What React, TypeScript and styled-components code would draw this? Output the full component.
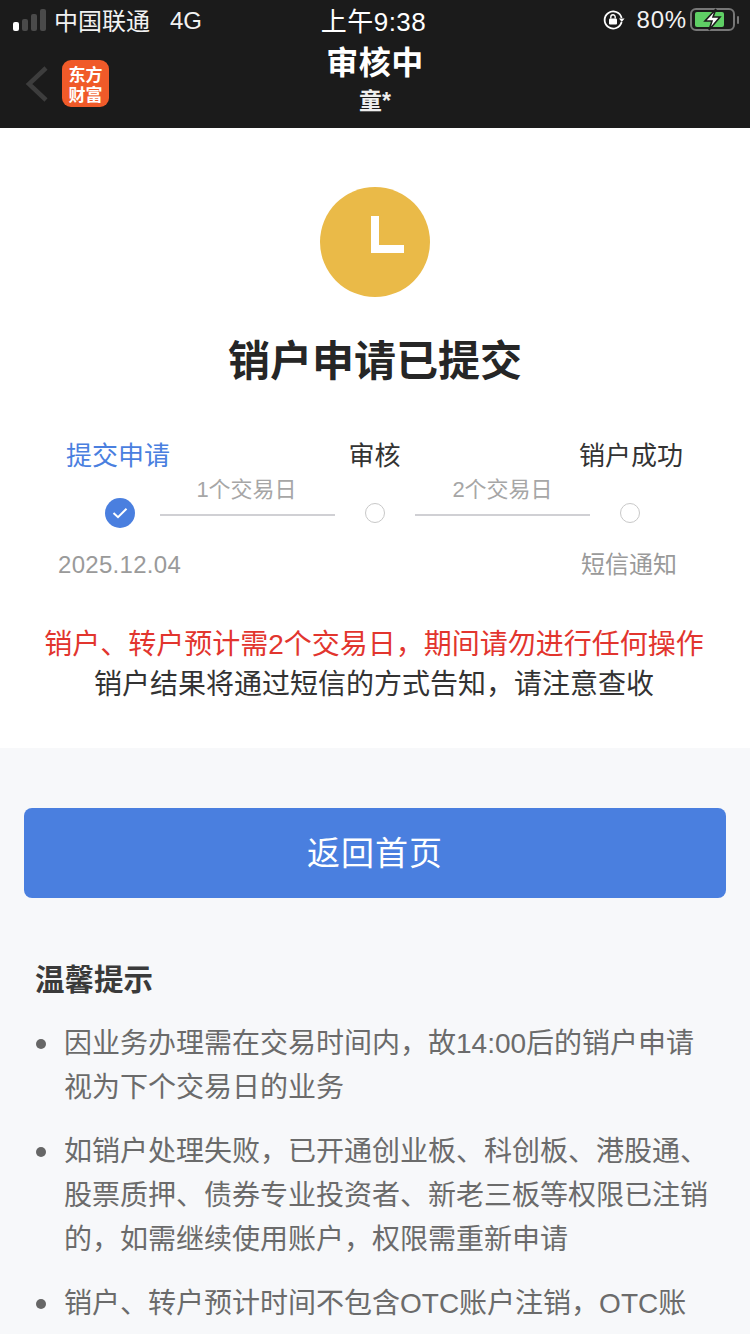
import React from 'react';
import styled, { createGlobalStyle } from 'styled-components';

const Global = createGlobalStyle`
  html, body {
    margin: 0;
    padding: 0;
    height: 1334px;
    overflow: hidden;
    background: #f7f8fa;
  }
  * { box-sizing: border-box; }
  body {
    font-family: "Liberation Sans", "Noto Sans CJK SC", sans-serif;
  }
`;

const Page = styled.div`
  width: 750px;
  height: 1334px;
  overflow: hidden;
  background: #f7f8fa;
`;

const Header = styled.header`
  height: 128px;
  background: #1b1b1b;
  color: #fff;
`;

const StatusBar = styled.div`
  height: 40px;
  padding: 0 11px 0 13px;
  display: grid;
  grid-template-columns: 1fr auto 1fr;
  align-items: center;
  font-size: 24px;
`;

const StatusLeft = styled.div`
  display: flex;
  align-items: center;
  gap: 7px;
  color: #f2f2f2;
  margin-top: -1px;
`;

const NetworkType = styled.span`
  margin-left: 13px;
  padding-top: 2px;
`;

const Clock = styled.div`
  font-size: 26px;
  letter-spacing: 0.5px;
  margin-left: -5px;
  margin-top: -1px;
`;

const StatusRight = styled.div`
  display: flex;
  align-items: center;
  justify-content: flex-end;
  gap: 5px;
  color: #f2f2f2;
`;

const Percent = styled.span`
  margin-left: 7px;
  margin-right: -2px;
  letter-spacing: 0.8px;
`;

const NavBar = styled.div`
  height: 88px;
  position: relative;
  display: flex;
  flex-direction: column;
  align-items: center;
`;

const NavLeft = styled.div`
  position: absolute;
  left: 24px;
  top: 20px;
  display: flex;
  align-items: center;
  gap: 12px;
`;

const Logo = styled.div`
  width: 47px;
  height: 47px;
  border-radius: 9px;
  background: #f05a29;
  color: #fff;
  font-family: "Noto Sans CJK SC", sans-serif;
  font-size: 17px;
  font-weight: 700;
  line-height: 20px;
  text-align: center;
  padding-top: 4px;
`;

const NavTitle = styled.div`
  font-size: 32px;
  font-weight: 700;
  line-height: 44px;
  margin-top: 1px;
  letter-spacing: 0.5px;
`;

const NavSub = styled.div`
  font-size: 23px;
  font-weight: 700;
  line-height: 30px;
  margin-top: 1px;
  color: #eee;
`;

const StatusCard = styled.section`
  height: 620px;
  background: #fff;
  display: flex;
  flex-direction: column;
  align-items: center;
  padding-top: 59px;
`;

const Dial = styled.div`
  width: 110px;
  height: 110px;
  border-radius: 50%;
  background: #eaba48;
  position: relative;

  &::before {
    content: '';
    position: absolute;
    left: 51px;
    top: 29px;
    width: 8px;
    height: 37px;
    background: #fff;
  }
  &::after {
    content: '';
    position: absolute;
    left: 51px;
    top: 58px;
    width: 33px;
    height: 8px;
    background: #fff;
  }
`;

const Heading = styled.h1`
  margin: 38px 0 0;
  font-size: 42px;
  line-height: 54px;
  font-weight: 700;
  color: #262626;
`;

const Steps = styled.div`
  width: 100%;
  margin-top: 49px;
`;

const LabelRow = styled.div`
  display: grid;
  grid-template-columns: 236px 277px 236px;
  text-align: center;
  line-height: 36px;
`;

const StepLabel = styled.div<{ $active?: boolean }>`
  color: ${p => (p.$active ? '#4a7fdf' : '#333')};
  font-size: 26px;
`;

const Track = styled.div`
  display: flex;
  align-items: flex-end;
  height: 54px;
  padding-left: 105px;
`;

const Node = styled.div<{ $done?: boolean }>`
  width: ${p => (p.$done ? 30 : 20)}px;
  height: ${p => (p.$done ? 30 : 20)}px;
  margin: ${p => (p.$done ? '0 25px 0 0' : '0 30px 5px')};
  border-radius: 50%;
  flex: none;
  display: flex;
  align-items: center;
  justify-content: center;
  background: ${p => (p.$done ? '#4a7fdf' : '#fff')};
  border: ${p => (p.$done ? 'none' : '1px solid #c8c8c8')};
`;

const Connector = styled.div`
  width: 175px;
  flex: none;
  height: 40px;
  border-bottom: 2px solid #d0d0d4;
  margin-bottom: 12px;
  text-align: center;
  font-size: 22px;
  line-height: 30px;
  color: #a6a6a6;
`;

const ConnectorLabel = styled.span<{ $shift: number }>`
  display: block;
  margin-left: ${p => p.$shift}px;
  margin-top: -1px;
`;

const NoteRow = styled.div`
  display: flex;
  justify-content: space-between;
  margin-top: 20px;
  padding: 0 73px 0 58px;
  font-size: 24px;
  line-height: 34px;
  color: #9a9a9a;
`;

const DateNote = styled.span`
  letter-spacing: 0.3px;
`;

const Notice = styled.div`
  margin-top: 43px;
  padding-right: 2px;
  text-align: center;
  font-size: 28px;
  line-height: 40px;
  color: #333;
`;

const NoticeRed = styled.div`
  color: #e2352e;
`;

const Actions = styled.div`
  padding: 60px 24px 0;
`;

const PrimaryButton = styled.button`
  display: block;
  width: 100%;
  height: 90px;
  padding: 0 0 5px;
  border: 0;
  border-radius: 8px;
  background: #4a7fdf;
  color: #fff;
  font: inherit;
  font-size: 33px;
  letter-spacing: 1px;
`;

const Tips = styled.section`
  padding: 62px 30px 0 34px;
`;

const TipsTitle = styled.h2`
  margin: 0 0 0 1px;
  font-size: 29.5px;
  line-height: 40px;
  font-weight: 700;
  color: #3a3a3a;
`;

const TipList = styled.ul`
  list-style: none;
  margin: 22px 0 0;
  padding: 0;
`;

const Tip = styled.li`
  position: relative;
  padding-left: 30px;
  margin-bottom: 20px;
  font-size: 28px;
  line-height: 44px;
  color: #6b6b6b;

  &::before {
    content: '';
    position: absolute;
    left: 2px;
    top: 17px;
    width: 10px;
    height: 10px;
    border-radius: 50%;
    background: #666;
  }
`;

const Signal = () => (
  <svg width="34" height="22" viewBox="0 0 34 22">
    <rect x="0" y="13" width="6" height="9" rx="2" fill="#fff" />
    <rect x="9" y="10" width="6" height="12" rx="2" fill="#4a4a4a" />
    <rect x="18" y="5" width="6" height="17" rx="2" fill="#4a4a4a" />
    <rect x="27" y="0" width="6" height="22" rx="2" fill="#4a4a4a" />
  </svg>
);

const RotationLock = () => (
  <svg width="22" height="20" viewBox="0 0 22 20">
    <path d="M18.6 8A8.6 8.6 0 1 0 18.6 12" fill="none" stroke="#fff" strokeWidth="1.8" />
    <path d="M16 8.5h5.6l-2.8 3.4z" fill="#fff" />
    <rect x="6" y="8.5" width="8" height="6" rx="1" fill="#fff" />
    <path d="M7.8 8.5V7a2.2 2.2 0 0 1 4.4 0v1.5" fill="none" stroke="#fff" strokeWidth="1.4" />
  </svg>
);

const Battery = () => (
  <svg width="49" height="24" viewBox="0 0 49 24">
    <rect x="1" y="1" width="43" height="21" rx="5" fill="none" stroke="#777" strokeWidth="2" />
    <rect x="5" y="4" width="29" height="15" rx="2" fill="#5fcf65" />
    <rect x="47" y="8" width="2" height="8" rx="1" fill="#777" />
    <path d="M26 1 15 13h7l-3 9 11-13h-7z" fill="#fff" stroke="#1b1b1b" strokeWidth="1.6" />
  </svg>
);

const BackChevron = () => (
  <svg width="26" height="38" viewBox="0 0 26 38">
    <path d="M22 3 5 19l17 16" fill="none" stroke="#3d3d3d" strokeWidth="4.5" />
  </svg>
);

const Check = () => (
  <svg width="16" height="12" viewBox="0 0 16 12">
    <path d="M1.5 6 6 10.2 14.5 1.8" fill="none" stroke="#fff" strokeWidth="2" />
  </svg>
);

export default function App() {
  return (
    <Page>
      <Global />
      <Header>
        <StatusBar>
          <StatusLeft>
            <Signal />
            <span>中国联通</span>
            <NetworkType>4G</NetworkType>
          </StatusLeft>
          <Clock>上午9:38</Clock>
          <StatusRight>
            <RotationLock />
            <Percent>80%</Percent>
            <Battery />
          </StatusRight>
        </StatusBar>
        <NavBar>
          <NavLeft>
            <BackChevron />
            <Logo>东方<br />财富</Logo>
          </NavLeft>
          <NavTitle>审核中</NavTitle>
          <NavSub>童*</NavSub>
        </NavBar>
      </Header>

      <StatusCard>
        <Dial />
        <Heading>销户申请已提交</Heading>
        <Steps>
          <LabelRow>
            <StepLabel $active>提交申请</StepLabel>
            <StepLabel>审核</StepLabel>
            <StepLabel>销户成功</StepLabel>
          </LabelRow>
          <Track>
            <Node $done><Check /></Node>
            <Connector><ConnectorLabel $shift={-2}>1个交易日</ConnectorLabel></Connector>
            <Node />
            <Connector><ConnectorLabel $shift={0}>2个交易日</ConnectorLabel></Connector>
            <Node />
          </Track>
          <NoteRow>
            <DateNote>2025.12.04</DateNote>
            <span>短信通知</span>
          </NoteRow>
        </Steps>
        <Notice>
          <NoticeRed>销户、转户预计需2个交易日，期间请勿进行任何操作</NoticeRed>
          <div>销户结果将通过短信的方式告知，请注意查收</div>
        </Notice>
      </StatusCard>

      <Actions>
        <PrimaryButton>返回首页</PrimaryButton>
      </Actions>

      <Tips>
        <TipsTitle>温馨提示</TipsTitle>
        <TipList>
          <Tip>因业务办理需在交易时间内，故14:00后的销户申请视为下个交易日的业务</Tip>
          <Tip>如销户处理失败，已开通创业板、科创板、港股通、股票质押、债券专业投资者、新老三板等权限已注销的，如需继续使用账户，权限需重新申请</Tip>
          <Tip>销户、转户预计时间不包含OTC账户注销，OTC账</Tip>
        </TipList>
      </Tips>
    </Page>
  );
}
